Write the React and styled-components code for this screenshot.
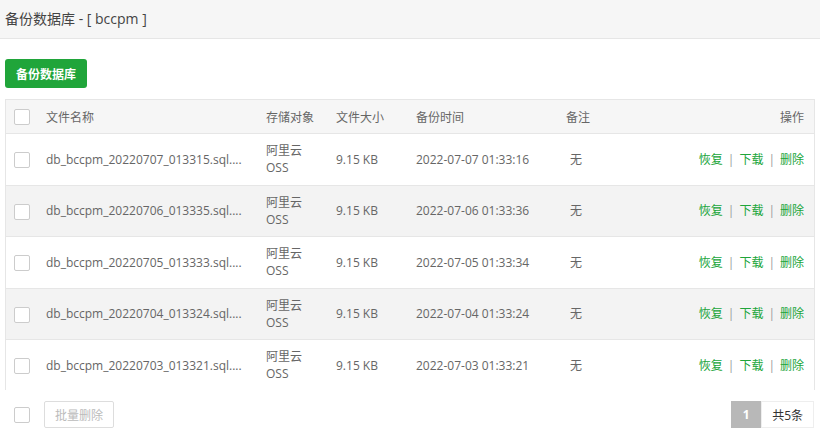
import React from 'react'
import styled, { createGlobalStyle } from 'styled-components';

const GlobalStyle = createGlobalStyle`
  html, body {
    margin: 0;
    padding: 0;
    background: #fff;
  }
  body {
    font-family: "Open Sans", "Noto Sans CJK SC", sans-serif;
    font-size: 12px;
    color: #666;
  }
`;

const TitleBar = styled.div`
  height: 38px;
  line-height: 38px;
  padding: 0 5px;
  background-color: #f6f6f6;
  border-bottom: 1px solid #e6e6e6;
  font-size: 14px;
  color: #444;
`;

const Content = styled.div`
  padding: 20px 5px 0 5px;
`;

const GreenButton = styled.button`
  height: 29px;
  padding: 0 11px;
  border: none;
  border-radius: 3px;
  background-color: #20a53a;
  color: white;
  font-family: inherit;
  font-size: 12px;
  font-weight: bold;
  cursor: pointer;
`;

const TableBox = styled.div`
  margin-top: 11px;
  height: 290px;
  overflow: hidden;
  border: 1px solid #e6e6e6;
  border-bottom: none;
`;

const Table = styled.table`
  width: 100%;
  border-collapse: collapse;
  table-layout: fixed;
`;

const Th = styled.th`
  height: 33px;
  padding: ${props => props.first ? '0 0 0 8px' : '0 10px'};
  background-color: #f6f6f6;
  border-bottom: 1px solid #e6e6e6;
  font-weight: normal;
  color: #666;
  text-align: ${props => props.align || 'left'};
  white-space: nowrap;
`;

const Tr = styled.tr`
  background-color: ${props => props.striped ? '#f3f3f3' : '#fff'};
`;

const Td = styled.td`
  padding: ${props => props.first ? '8px 0 8px 8px' : '8px 10px'};
  line-height: 17.25px;
  height: 34.5px;
  border-bottom: 1px solid #e6e6e6;
  color: #666;
  text-align: ${props => props.align || 'left'};
  white-space: ${props => props.wrap ? 'normal' : 'nowrap'};
  overflow: hidden;
`;

const Check = styled.span`
  display: inline-block;
  width: 14px;
  height: 14px;
  border: 1px solid #ccc;
  border-radius: 2px;
  background: #fff;
  vertical-align: middle;
`;

const NoteText = styled.span`
  padding-left: 4px;
`;

const Link = styled.a`
  color: #20a53a;
  text-decoration: none;
  cursor: pointer;
`;

const Sep = styled.span`
  color: #999;
  margin: 0 5px;
`;

const Footer = styled.div`
  display: flex;
  align-items: center;
  justify-content: space-between;
  padding: 11px 0 0 9px;
`;

const FooterLeft = styled.div`
  display: flex;
  align-items: center;
  gap: 14px;
`;

const GhostButton = styled.button`
  height: 27px;
  padding: 0 10px;
  border: 1px solid #ddd;
  border-radius: 2px;
  background: #fff;
  color: #bbb;
  font-family: inherit;
  font-size: 12px;
`;

const Pager = styled.div`
  display: flex;
  height: 27px;
  margin-right: 1px;
`;

const PageItem = styled.span`
  display: flex;
  align-items: center;
  justify-content: center;
  height: 27px;
  box-sizing: border-box;
  padding: 0 ${props => props.current ? '0' : '10px'};
  width: ${props => props.current ? '30px' : 'auto'};
  background-color: ${props => props.current ? '#b8b8b8' : '#fff'};
  color: ${props => props.current ? '#fff' : '#333'};
  border: ${props => props.current ? 'none' : '1px solid #eee'};
  font-weight: ${props => props.current ? 'bold' : 'normal'};
`;

const backups = [
  { name: 'db_bccpm_20220707_013315.sql.zip', time: '2022-07-07 01:33:16' },
  { name: 'db_bccpm_20220706_013335.sql.zip', time: '2022-07-06 01:33:36' },
  { name: 'db_bccpm_20220705_013333.sql.zip', time: '2022-07-05 01:33:34' },
  { name: 'db_bccpm_20220704_013324.sql.zip', time: '2022-07-04 01:33:24' },
  { name: 'db_bccpm_20220703_013321.sql.zip', time: '2022-07-03 01:33:21' },
];

// shorten long file names the same way the panel does
const shortName = (name) => name.slice(0, 28) + '....';

const App = () => {
  return (
    <>
      <GlobalStyle />
      <TitleBar>备份数据库 - [ bccpm ]</TitleBar>
      <Content>
        <GreenButton>备份数据库</GreenButton>
        <TableBox>
          <Table>
            <colgroup>
              <col style={{ width: 30 }} />
              <col style={{ width: 220 }} />
              <col style={{ width: 70 }} />
              <col style={{ width: 80 }} />
              <col style={{ width: 150 }} />
              <col style={{ width: 90 }} />
              <col />
            </colgroup>
            <thead>
              <tr>
                <Th first='1'><Check /></Th>
                <Th>文件名称</Th>
                <Th>存储对象</Th>
                <Th>文件大小</Th>
                <Th>备份时间</Th>
                <Th>备注</Th>
                <Th align='right'>操作</Th>
              </tr>
            </thead>
            <tbody>
              {backups.map((b, i) => (
                <Tr key={b.name} striped={i % 2 === 1}>
                  <Td first='1'><Check /></Td>
                  <Td>{shortName(b.name)}</Td>
                  <Td wrap='1'>阿里云 OSS</Td>
                  <Td>9.15 KB</Td>
                  <Td>{b.time}</Td>
                  <Td><NoteText>无</NoteText></Td>
                  <Td align='right'>
                    <Link>恢复</Link><Sep>|</Sep><Link>下载</Link><Sep>|</Sep><Link>删除</Link>
                  </Td>
                </Tr>
              ))}
            </tbody>
          </Table>
        </TableBox>
        <Footer>
          <FooterLeft>
            <Check />
            <GhostButton>批量删除</GhostButton>
          </FooterLeft>
          <Pager>
            <PageItem current>1</PageItem>
            <PageItem>共5条</PageItem>
          </Pager>
        </Footer>
      </Content>
    </>
  )
}

export default App
